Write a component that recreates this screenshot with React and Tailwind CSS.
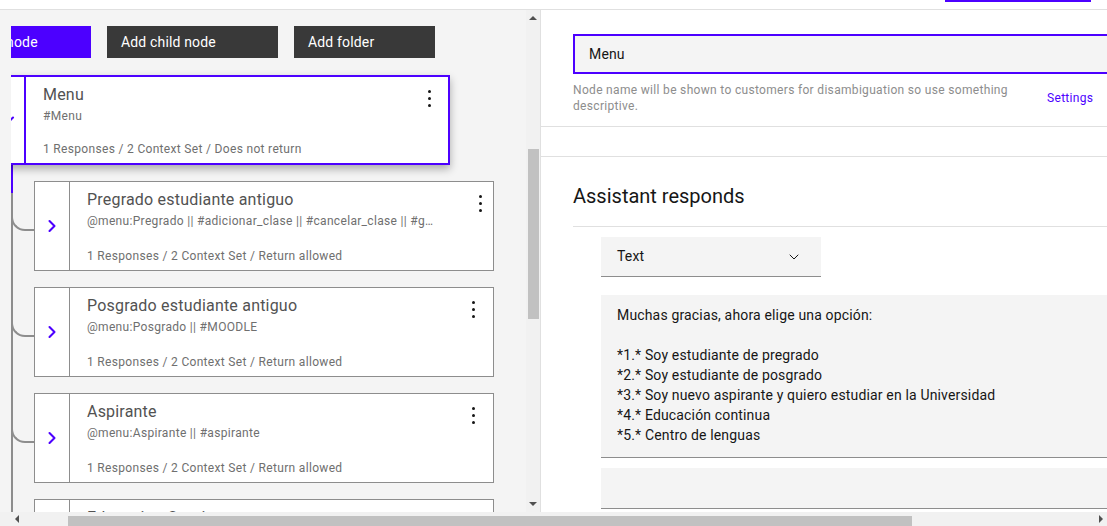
import { ChevronRight, ChevronDown } from "lucide-react";

function Kebab() {
  return (
    <div className="flex flex-col gap-[4px] mt-[5px] shrink-0">
      <span className="w-[3px] h-[3px] rounded-full bg-[#161616]" />
      <span className="w-[3px] h-[3px] rounded-full bg-[#161616]" />
      <span className="w-[3px] h-[3px] rounded-full bg-[#161616]" />
    </div>
  );
}

function CardBody({ title, condition, footer, kebabGap }) {
  return (
    <div className="flex-1 min-w-0 flex flex-col pl-[17px] pt-[8px] pb-[6px]">
      <div className="flex items-start">
        <div className="flex-1 min-w-0">
          <div className="text-[16px] leading-5 text-[#525252] whitespace-nowrap tracking-[0.2px]">{title}</div>
          <div className="mt-[3px] text-[12px] leading-4 text-[#6f6f6f] whitespace-nowrap overflow-hidden tracking-[0.32px]">{condition}</div>
        </div>
        <div className={kebabGap}>
          <Kebab />
        </div>
      </div>
      <div className="mt-auto text-[12px] leading-4 text-[#6f6f6f] whitespace-nowrap tracking-[0.32px]">{footer}</div>
    </div>
  );
}

function ChildNode({ title, condition, footer, kebabGap = "mr-[18px]" }) {
  return (
    <div className="flex">
      <div className="-ml-[2px] w-[23px] h-[50px] shrink-0 border-l-2 border-b-2 border-[#8d8d8d] rounded-bl-[14px]" />
      <div className="w-[460px] h-[90px] shrink-0 bg-white border border-[#8d8d8d] flex">
        <div className="w-[35px] shrink-0 border-r border-[#8d8d8d] flex items-center justify-center">
          <ChevronRight size={20} strokeWidth={2.5} className="text-[#4c00ff]" />
        </div>
        <CardBody title={title} condition={condition} footer={footer} kebabGap={kebabGap} />
      </div>
    </div>
  );
}

export default function App() {
  return (
    <div className="w-[1107px] h-[526px] overflow-hidden bg-white flex flex-col font-[Roboto,sans-serif]">
      {/* top strip */}
      <div className="h-[10px] shrink-0 border-b border-[#e0e0e0] bg-white">
        <div className="ml-[945px] w-[146px] h-[2px] bg-[#4c00ff]" />
      </div>

      <div className="flex-1 min-h-0 flex">
        {/* tree panel */}
        <div className="w-[540px] shrink-0 flex bg-[#f4f4f4]">
          <div className="flex-1 min-w-0 pl-[11px]">
            <div className="h-full overflow-hidden">
              <div className="pt-4 flex gap-4 text-[14px] text-white tracking-[0.16px]">
                <div className="-ml-[48px] w-[128px] h-8 shrink-0 bg-[#4c00ff] flex items-center pl-[14px]">Add node</div>
                <div className="w-[171px] h-8 shrink-0 bg-[#393939] flex items-center pl-[14px]">Add child node</div>
                <div className="w-[141px] h-8 shrink-0 bg-[#393939] flex items-center pl-[14px]">Add folder</div>
              </div>

              <div className="mt-[17px] -ml-[21px] w-[460px] h-[90px] bg-white border-2 border-[#4c00ff] flex shadow-[0_4px_8px_rgba(0,0,0,0.3)] relative z-10">
                <div className="w-[34px] shrink-0 border-r-2 border-[#4c00ff] flex items-center justify-center">
                  <ChevronDown size={20} strokeWidth={2.5} className="text-[#4c00ff]" />
                </div>
                <CardBody
                  title="Menu"
                  condition="#Menu"
                  footer="1 Responses / 2 Context Set / Does not return"
                  kebabGap="mr-[17px]"
                />
              </div>

              <div className="relative border-l-2 border-[#8d8d8d] pt-4 flex flex-col gap-4">
                <div className="absolute -left-[2px] top-0 w-[2px] h-[28px] bg-[#4c00ff]" />
                <ChildNode
                  title="Pregrado estudiante antiguo"
                  condition="@menu:Pregrado || #adicionar_clase || #cancelar_clase || #g…"
                  footer="1 Responses / 2 Context Set / Return allowed"
                  kebabGap="mr-[11px]"
                />
                <ChildNode
                  title="Posgrado estudiante antiguo"
                  condition="@menu:Posgrado || #MOODLE"
                  footer="1 Responses / 2 Context Set / Return allowed"
                />
                <ChildNode
                  title="Aspirante"
                  condition="@menu:Aspirante || #aspirante"
                  footer="1 Responses / 2 Context Set / Return allowed"
                />
                <ChildNode
                  title="Educacion Continua"
                  condition="@menu:Educacion || #educacion_continua"
                  footer="1 Responses / 2 Context Set / Return allowed"
                />
              </div>
            </div>
          </div>

          {/* vertical scrollbar */}
          <div className="w-[14px] shrink-0 bg-[#f1f1f1] flex flex-col items-center">
            <div className="mt-[6px] w-0 h-0 border-x-[4px] border-x-transparent border-b-[4px] border-b-[#505050]" />
            <div className="mt-[129px] w-[11px] h-[170px] bg-[#c1c1c1]" />
            <div className="mt-auto mb-[6px] w-0 h-0 border-x-[4px] border-x-transparent border-t-[4px] border-t-[#505050]" />
          </div>
        </div>

        {/* node editor */}
        <div className="flex-1 min-w-0 overflow-hidden border-l border-[#e0e0e0] bg-white">
          <div className="h-[117px] border-b border-[#e0e0e0] pl-8 pt-6">
            <div className="w-[600px] h-10 border-2 border-[#4c00ff] bg-[#f4f4f4] flex items-center pl-[14px] text-[14px] text-[#161616] tracking-[0.16px]">
              Menu
            </div>
            <div className="mt-2 flex items-center">
              <p className="w-[474px] shrink-0 text-[12px] leading-4 text-[#8d8d8d] tracking-[0.32px]">
                Node name will be shown to customers for disambiguation so use something
                <br />
                descriptive.
              </p>
              <span className="text-[12px] text-[#4c00ff] tracking-[0.32px]">Settings</span>
            </div>
          </div>
          <div className="h-[30px] border-b border-[#e0e0e0]" />

          <div className="pl-8">
            <h2 className="pt-[25px] pb-4 border-b border-[#e0e0e0] text-[20px] leading-7 text-[#161616]">
              Assistant responds
            </h2>
            <div className="pl-7">
              <div className="mt-[10px] w-[220px] h-10 bg-[#f4f4f4] border-b border-[#8d8d8d] flex items-center justify-between pl-4 pr-[19px] text-[14px] text-[#161616] tracking-[0.16px]">
                <span>Text</span>
                <ChevronDown size={16} strokeWidth={1.5} />
              </div>
              <div className="mt-[18px] w-[600px] bg-[#f4f4f4] border-b border-[#8d8d8d] pl-4 pt-[10px] pb-3 text-[14px] leading-5 text-[#161616] whitespace-pre-line tracking-[0.16px]">
                {"Muchas gracias, ahora elige una opción:\n\n*1.* Soy estudiante de pregrado\n*2.* Soy estudiante de posgrado\n*3.* Soy nuevo aspirante y quiero estudiar en la Universidad\n*4.* Educación continua\n*5.* Centro de lenguas"}
              </div>
              <div className="mt-[10px] w-[600px] h-[41px] bg-[#f4f4f4] border-b border-[#8d8d8d]" />
            </div>
          </div>
        </div>
      </div>

      {/* horizontal scrollbar */}
      <div className="h-[14px] shrink-0 bg-[#f1f1f1] flex items-center">
        <div className="ml-[15px] w-0 h-0 border-y-[4px] border-y-transparent border-r-[4px] border-r-[#505050]" />
        <div className="ml-[49px] self-end w-[844px] h-[10px] bg-[#c1c1c1]" />
        <div className="ml-auto mr-[4px] w-0 h-0 border-y-[4px] border-y-transparent border-l-[4px] border-l-[#505050]" />
      </div>
    </div>
  );
}
